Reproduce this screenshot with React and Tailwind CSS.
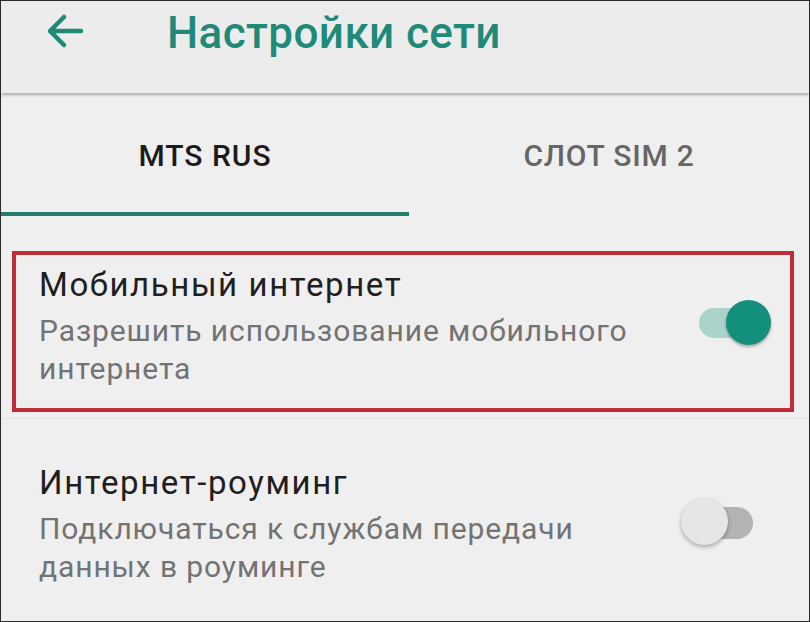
import React from "react";

const font = { fontFamily: "Roboto, 'Noto Sans', sans-serif" };

const Toggle = ({ on }) => {
  if (on) {
    return (
      <div className="relative w-[72px] h-[46px]">
        <div className="absolute left-0 top-[8px] w-[50px] h-[30px] rounded-full bg-[#a9d3cb]" />
        <div className="absolute right-0 top-0 w-[45px] h-[45px] rounded-full bg-[#13907b] shadow-[0_2px_3px_rgba(0,0,0,0.3)]" />
      </div>
    );
  }
  return (
    <div className="relative w-[72px] h-[48px]">
      <div className="absolute right-0 top-[9px] w-[50px] h-[32px] rounded-full bg-[#b3b3b3]" />
      <div className="absolute left-0 top-0 w-[47px] h-[47px] rounded-full bg-[#e6e6e6] shadow-[0_2px_4px_rgba(0,0,0,0.3)]" />
    </div>
  );
};

const SettingRow = ({ title, desc, on }) => (
  <div className="flex items-start">
    <div className="flex-1">
      <div className="text-[33px] leading-[30px] tracking-[1.6px] text-[#1f1f1f]">
        {title}
      </div>
      <div className="mt-[12px] text-[30px] leading-[38px] tracking-[0.9px] text-[#737373]">
        {desc}
      </div>
    </div>
    <div className="pt-[30px]">
      <Toggle on={on} />
    </div>
  </div>
);

export default function App() {
  return (
    <div
      className="w-[810px] h-[622px] bg-[#efefef] border border-[#2a2a2a] overflow-hidden box-border"
      style={font}
    >
      {/* Header */}
      <div className="relative z-10 h-[92px] bg-[#ececec] shadow-[0_2px_3px_rgba(0,0,0,0.28)] flex items-start">
        <div className="pl-[45px] pt-[12px]">
          <svg width="38" height="36" viewBox="0 0 38 36" fill="none">
            <path
              d="M35 18H5M18 4L4 18L18 32"
              stroke="#1e8a77"
              strokeWidth="4.5"
              strokeLinecap="round"
              strokeLinejoin="round"
            />
          </svg>
        </div>
        <div className="ml-[83px] pt-[11px] text-[44px] leading-[42px] font-medium text-[#1f8a78] tracking-[0.4px]">
          Настройки сети
        </div>
      </div>

      {/* Tabs */}
      <div className="h-[126px] flex flex-col">
        <div className="flex pt-[48px]">
          <div className="w-[408px] text-center text-[30px] leading-[30px] font-medium tracking-[1px] text-[#1b1b1b]">
            MTS RUS
          </div>
          <div className="flex-1 text-center text-[30px] leading-[30px] font-medium tracking-[0.8px] text-[#666666]">
            СЛОТ SIM 2
          </div>
        </div>
        <div className="mt-auto mb-[3px] w-[408px] h-[4px] bg-[#217c69]" />
      </div>

      {/* Mobile internet */}
      <div className="mt-[32px] ml-[11px] mr-[15px] border-[4px] border-[#c12c3b] pl-[23px] pr-[19px] pt-[15px] pb-[20px]">
        <SettingRow
          title="Мобильный интернет"
          desc={
            <>
              Разрешить использование мобильного
              <br />
              интернета
            </>
          }
          on
        />
      </div>
      <div className="mt-[6px] h-[1px] bg-[#e3e3e3]" />

      {/* Roaming */}
      <div className="mt-[49px] pl-[38px] pr-[56px]">
        <SettingRow
          title="Интернет-роуминг"
          desc={
            <>
              Подключаться к службам передачи
              <br />
              данных в роуминге
            </>
          }
          on={false}
        />
      </div>
    </div>
  );
}
